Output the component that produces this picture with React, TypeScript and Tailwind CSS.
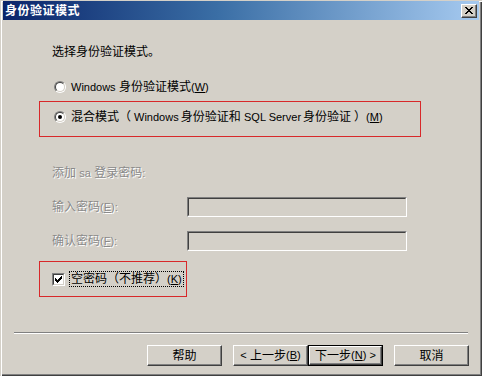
import React from "react";

function Radio({ checked }: { checked?: boolean }) {
  return (
    <span className="flex w-[12px] h-[12px] shrink-0 rounded-full border border-t-[#808080] border-l-[#808080] border-b-white border-r-white">
      <span className="flex w-full h-full items-center justify-center rounded-full border border-t-[#404040] border-l-[#404040] border-b-[#d4d0c8] border-r-[#d4d0c8] bg-white">
        {checked && <span className="block w-[4px] h-[4px] rounded-full bg-black" />}
      </span>
    </span>
  );
}

function Check() {
  return (
    <span className="flex w-[13px] h-[13px] shrink-0 border border-t-[#808080] border-l-[#808080] border-b-white border-r-white">
      <span className="flex w-full h-full items-center justify-center border border-t-[#404040] border-l-[#404040] border-b-[#d4d0c8] border-r-[#d4d0c8] bg-white">
        <svg width="7" height="7" viewBox="0 0 7 7" shapeRendering="crispEdges">
          <path
            d="M6 0h1v1h-1zM5 1h2v1h-2zM0 2h1v1h-1zM4 2h3v1h-3zM0 3h2v1h-2zM3 3h3v1h-3zM0 4h5v1h-5zM1 5h3v1h-3zM2 6h1v1h-1z"
            fill="#000"
          />
        </svg>
      </span>
    </span>
  );
}

function Btn({ children, def }: { children: React.ReactNode; def?: boolean }) {
  const inner = (
    <div className="flex w-full h-full items-center justify-center border border-t-white border-l-white border-r-[#404040] border-b-[#404040] shadow-[inset_-1px_-1px_0_#808080,inset_1px_1px_0_#d4d0c8] text-[12px] leading-none text-black">
      {children}
    </div>
  );
  if (def) {
    return <div className="w-[75px] h-[21px] border border-black">{inner}</div>;
  }
  return <div className="w-[75px] h-[21px]">{inner}</div>;
}

function TextBox() {
  return (
    <div className="w-[220px] h-[20px] border border-t-[#808080] border-l-[#808080] border-b-white border-r-white">
      <div className="w-full h-full border border-t-[#404040] border-l-[#404040] border-b-[#d4d0c8] border-r-[#d4d0c8] bg-[#d4d0c8]" />
    </div>
  );
}

const dis = "text-[#8a8a8a] [text-shadow:1px_1px_0_#ffffff]";

export default function App() {
  return (
    <div className="w-[482px] h-[376px] overflow-hidden bg-[#d4d0c8] pt-[1px] px-[3px] flex flex-col shadow-[inset_1px_1px_0_#d4d0c8,inset_2px_2px_0_#ffffff,inset_-1px_-1px_0_#404040,inset_-2px_-2px_0_#808080] font-['Liberation_Sans','Noto_Sans_CJK_SC',sans-serif] text-[12px] text-black">
      {/* Title bar */}
      <div className="h-[19px] flex items-center justify-between pl-[2px] pr-[2px] bg-[linear-gradient(to_right,#0a246a,#3a6ea5_45%,#a6caf0)]">
        <span className="text-white font-bold text-[12px] leading-none tracking-[0.5px]">身份验证模式</span>
        <div className="w-[16px] h-[14px] flex border border-t-white border-l-white border-r-[#404040] border-b-[#404040] shadow-[inset_-1px_-1px_0_#808080] bg-[#d4d0c8] items-center justify-center">
          <svg width="8" height="7" viewBox="0 0 8 7" shapeRendering="crispEdges">
            <path
              d="M0 0h2v1h-2zM6 0h2v1h-2zM1 1h2v1h-2zM5 1h2v1h-2zM2 2h4v1h-4zM3 3h2v1h-2zM2 4h4v1h-4zM1 5h2v1h-2zM5 5h2v1h-2zM0 6h2v1h-2zM6 6h2v1h-2z"
              fill="#000"
            />
          </svg>
        </div>
      </div>

      {/* Heading */}
      <div className="mt-[26px] ml-[49px] h-[12px] leading-[12px]">选择身份验证模式。</div>

      {/* Radio 1 */}
      <div className="mt-[21px] ml-[51px] h-[16px] flex items-center gap-[5px]">
        <Radio />
        <span className="leading-none">
          <span className="text-[11px]">Windows</span> 身份验证模式<span className="text-[11px]">(<u>W</u>)</span>
        </span>
      </div>

      {/* Radio 2 in red box */}
      <div className="mt-[6px] ml-[36px] w-[382px] h-[36px] border border-[#d8282a] pt-[7px] pl-[14px]">
        <div className="h-[16px] flex items-center gap-[5px]">
          <Radio checked />
          <span className="leading-none whitespace-nowrap">
            混合模式<span className="mr-[3px]">（</span><span className="text-[11px] mr-[2px]">Windows</span>身份验证和 <span className="text-[11px] mr-[2px]">SQL Server</span>身份验证<span className="ml-[3px]">）</span><span className="text-[11px]">(<u>M</u>)</span>
          </span>
        </div>
      </div>

      {/* sa password */}
      <div className={`mt-[30px] ml-[49px] h-[12px] leading-[12px] ${dis}`}>
        添加 <span className="text-[11px]">sa</span> 登录密码<span className="text-[11px]">:</span>
      </div>

      <div className="mt-[18px] ml-[49px] flex items-center">
        <span className={`w-[135px] leading-none ${dis}`}>
          输入密码<span className="text-[11px]">(<u>E</u>):</span>
        </span>
        <TextBox />
      </div>

      <div className="mt-[14px] ml-[49px] flex items-center">
        <span className={`w-[135px] leading-none ${dis}`}>
          确认密码<span className="text-[11px]">(<u>F</u>):</span>
        </span>
        <TextBox />
      </div>

      {/* Checkbox in red box */}
      <div className="mt-[10px] ml-[36px] w-[148px] h-[36px] border border-[#d8282a] pl-[12px] flex items-center">
        <Check />
        <span className="ml-[4px] h-[16px] flex items-center px-[1px] border border-dotted border-black leading-none whitespace-nowrap">
          空密码（不推荐）<span className="text-[11px]">(<u>K</u>)</span>
        </span>
      </div>

      {/* Separator */}
      <div className="mt-[35px] mx-[11px] h-[2px] border-t border-t-[#808080] border-b border-b-white" />

      {/* Buttons */}
      <div className="mt-[11px] flex justify-end pr-[10px]">
        <Btn>帮助</Btn>
        <div className="w-[11px]" />
        <Btn>
          <span className="text-[11px]">&lt;</span>&nbsp;上一步<span className="text-[11px]">(<u>B</u>)</span>
        </Btn>
        <Btn def>
          下一步 <span className="text-[11px]">(<u>N</u>)&nbsp;&gt;</span>
        </Btn>
        <div className="w-[11px]" />
        <Btn>取消</Btn>
      </div>
    </div>
  );
}
